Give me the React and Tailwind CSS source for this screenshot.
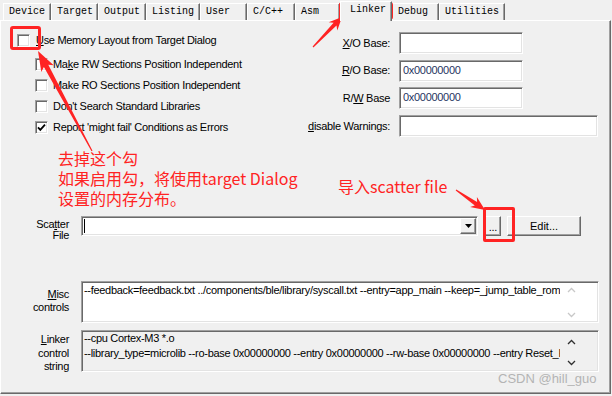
import clsx from "clsx";

const sunken =
  "border border-t-[#a0a0a0] border-l-[#a0a0a0] border-r-white border-b-white shadow-[inset_1px_1px_0_#696969,inset_-1px_-1px_0_#e3e3e3]";
const raised =
  "border border-t-white border-l-white border-r-[#696969] border-b-[#696969] shadow-[inset_-1px_-1px_0_#a0a0a0]";

const tabs = [
  { name: "Device", w: "w-[48px]" },
  { name: "Target", w: "w-[47px]" },
  { name: "Output", w: "w-[48px]" },
  { name: "Listing", w: "w-[54px]" },
  { name: "User", w: "w-[47px]" },
  { name: "C/C++", w: "w-[48px]" },
  { name: "Asm", w: "w-[45px]" },
  { name: "Linker", w: "w-[52px]", active: true },
  { name: "Debug", w: "w-[47px]" },
  { name: "Utilities", w: "w-[66px]" },
];

// tapered arrow like the screenshot tool draws
function arrow(x1, y1, x2, y2, head, hw, sw) {
  const dx = x2 - x1;
  const dy = y2 - y1;
  const len = Math.hypot(dx, dy);
  const ux = dx / len;
  const uy = dy / len;
  const nx = -uy;
  const ny = ux;
  const bx = x2 - ux * head;
  const by = y2 - uy * head;
  const nb = 3;
  const pts = [
    [x1 + nx * 0.6, y1 + ny * 0.6],
    [bx + ux * nb + nx * sw, by + uy * nb + ny * sw],
    [bx + nx * hw, by + ny * hw],
    [x2, y2],
    [bx - nx * hw, by - ny * hw],
    [bx + ux * nb - nx * sw, by + uy * nb - ny * sw],
    [x1 - nx * 0.6, y1 - ny * 0.6],
  ];
  return pts.map((p) => p.map((v) => v.toFixed(1)).join(",")).join(" ");
}

function Check({ checked, className }) {
  return (
    <span className={clsx("flex h-[13px] w-[13px] shrink-0 items-center justify-center bg-white", sunken, className)}>
      {checked && (
        <svg width="9" height="9" viewBox="0 0 9 9">
          <path d="M1 4.3 L3.3 6.8 L8 1.6" fill="none" stroke="#000" strokeWidth="1.8" />
        </svg>
      )}
    </span>
  );
}

function Field({ className, children }) {
  return (
    <div className={clsx("h-[22px] bg-white pl-[3px] leading-[19px] text-[#1f3461]", sunken, className)}>
      {children}
    </div>
  );
}

function Btn({ className, children }) {
  return <div className={clsx("flex justify-center bg-[#f0f0f0]", raised, className)}>{children}</div>;
}

function Chevron({ up, color }) {
  return (
    <svg width="9" height="6" viewBox="0 0 9 6">
      <path d={up ? "M1 5 L4.5 1.5 L8 5" : "M1 1 L4.5 4.5 L8 1"} fill="none" stroke={color} strokeWidth="1.3" />
    </svg>
  );
}

export default function App() {
  return (
    <div className="relative h-[396px] w-[612px] overflow-hidden bg-[#f0f0f0] font-['Liberation_Sans',Arial,sans-serif] text-[11px] text-black">
      {/* tabs */}
      <div className="flex h-[20px] items-end pl-[3px] font-['Liberation_Mono','DejaVu_Sans_Mono',monospace] text-[10px]">
        {tabs.map((t) =>
          t.active ? (
            <div key={t.name} className={clsx("relative z-10 -mb-px h-[20px] bg-[#f0f0f0] pl-[9px] leading-[15px] border-t border-l border-r border-t-white border-l-white border-r-[#696969] shadow-[inset_-1px_0_0_#a0a0a0]", t.w)}>
              {t.name}
            </div>
          ) : (
            <div key={t.name} className={clsx("h-[17px] pl-[5px] leading-[15px] border-t border-l border-r border-t-white border-l-white border-r-[#696969] shadow-[inset_-1px_0_0_#a0a0a0]", t.w)}>
              {t.name}
            </div>
          )
        )}
      </div>

      {/* page */}
      <div className={clsx("flex h-[374px] w-[611px] flex-col tracking-[-0.3px]", raised)}>
        <div className="flex">
          <div className="w-[299px] pl-[16px] pt-[9px]">
            <div className="flex h-[21px] items-center gap-[6px]">
              <Check />
              <span><u>U</u>se Memory Layout from Target Dialog</span>
            </div>
            <div className="mt-[3px] pl-[18px]">
              <div className="flex h-[21px] items-center gap-[5px]">
                <Check />
                <span>Ma<u>k</u>e RW Sections Position Independent</span>
              </div>
              <div className="flex h-[21px] items-center gap-[5px]">
                <Check />
                <span>Make RO Sections Position Independent</span>
              </div>
              <div className="flex h-[21px] items-center gap-[5px]">
                <Check />
                <span>Don't Search Standard Libraries</span>
              </div>
              <div className="flex h-[21px] items-center gap-[5px]">
                <Check checked />
                <span>Report 'mi<u>g</u>ht fail' Conditions as Errors</span>
              </div>
            </div>
          </div>

          <div className="grid grid-cols-[90px_auto] items-center justify-start gap-x-[9px] gap-y-[4px] pt-[10px]">
            <span className="text-right"><u>X</u>/O Base:</span>
            <Field className="w-[124px]" />
            <span className="text-right"><u>R</u>/O Base:</span>
            <Field className="w-[124px]">0x00000000</Field>
            <span className="text-right">R/<u>W</u> Base</span>
            <Field className="w-[124px]">0x00000000</Field>
            <span className="text-right"><u>d</u>isable Warnings:</span>
            <Field className="w-[199px]" />
          </div>
        </div>

        {/* scatter file */}
        <div className="mt-[78px] flex items-start">
          <div className="w-[68px] pt-[3px] text-right leading-[11px]">
            Sca<u>t</u>ter
            <br />
            File
          </div>
          <div className={clsx("ml-[12px] flex h-[20px] w-[397px] items-center bg-white", sunken)}>
            <span className="ml-[2px] h-[14px] w-px bg-black" />
            <Btn className="ml-auto mr-px h-[16px] w-[16px] items-center">
              <svg width="7" height="4" viewBox="0 0 7 4">
                <path d="M0 0 H7 L3.5 4 Z" fill="#000" />
              </svg>
            </Btn>
          </div>
          <Btn className="ml-[7px] h-[20px] w-[16px] items-end pb-[2px] leading-[11px]">...</Btn>
          <Btn className="ml-[6px] h-[20px] w-[74px] items-center tracking-normal">Edit...</Btn>
        </div>

        {/* misc controls */}
        <div className="mt-[40px] flex items-start">
          <div className="w-[68px] pt-[7px] text-right leading-[13px]">
            <u>M</u>isc
            <br />
            controls
          </div>
          <div className={clsx("ml-[12px] flex h-[42px] w-[518px] bg-white", sunken)}>
            <div className="flex-1 overflow-hidden whitespace-nowrap pl-[2px] pt-[1px] leading-[14px]">
              --feedback=feedback.txt ../components/ble/library/syscall.txt --entry=app_main --keep=_jump_table_rom --keep=_jump_table
            </div>
            <div className="flex w-[22px] flex-col items-center justify-between pt-[5px] pb-[4px]">
              <Chevron up color="#c8c8c8" />
              <Chevron color="#c8c8c8" />
            </div>
            <div className="w-[16px]" />
          </div>
        </div>

        {/* linker control string */}
        <div className="mt-[7px] flex items-start">
          <div className="w-[68px] pt-[3px] text-right leading-[13.5px]">
            <u>L</u>inker
            <br />
            control
            <br />
            string
          </div>
          <div className={clsx("ml-[12px] flex h-[42px] w-[518px] bg-[#f0f0f0]", sunken)}>
            <div className="flex-1 overflow-hidden whitespace-nowrap pl-[2px] leading-[14.5px]">
              <div>--cpu Cortex-M3 *.o</div>
              <div>--library_type=microlib --ro-base 0x00000000 --entry 0x00000000 --rw-base 0x00000000 --entry Reset_Handler</div>
            </div>
            <div className="flex w-[22px] flex-col items-center justify-between pt-[8px] pb-[5px]">
              <Chevron up color="#303030" />
              <Chevron color="#303030" />
            </div>
            <div className="w-[16px]" />
          </div>
        </div>
      </div>

      {/* annotations drawn over the screenshot */}
      <div className="pointer-events-none absolute left-[10px] top-[26px] h-[24px] w-[31px] rounded-[3px] border-[3px] border-[#ff2323]" />
      <div className="pointer-events-none absolute left-[339px] top-[2px] h-[18px] w-[54px] rounded-[3px] border-[3px] border-[#ff2323]" />
      <div className="pointer-events-none absolute left-[483px] top-[207px] h-[35px] w-[32px] rounded-[2px] border-[3px] border-[#ff2323]" />

      <svg className="pointer-events-none absolute left-0 top-0" width="612" height="396">
        <polygon points={arrow(313, 47, 342, 17, 13, 6, 2)} fill="#ff2323" />
        <polygon points={arrow(92, 151, 38, 51, 20, 7, 2.5)} fill="#ff2323" />
        <polygon points={arrow(456, 190, 485, 210, 14, 6, 2)} fill="#ff2323" />
      </svg>

      <div className="pointer-events-none absolute left-[58px] top-[148px] font-['Noto_Sans_CJK_SC','Noto_Sans',sans-serif] text-[16px] leading-[20px] text-[#ff2323]">
        <div>去掉这个勾</div>
        <div>如果启用勾，将使用target Dialog</div>
        <div>设置的内存分布。</div>
      </div>
      <div className="pointer-events-none absolute left-[338px] top-[176px] font-['Noto_Sans_CJK_SC','Noto_Sans',sans-serif] text-[16px] leading-[20px] text-[#ff2323]">
        导入scatter file
      </div>

      <div className="pointer-events-none absolute left-[498px] top-[371px] text-[13px] leading-[16px] text-[#b4b4b4]">
        CSDN @hill_guo
      </div>
    </div>
  );
}
